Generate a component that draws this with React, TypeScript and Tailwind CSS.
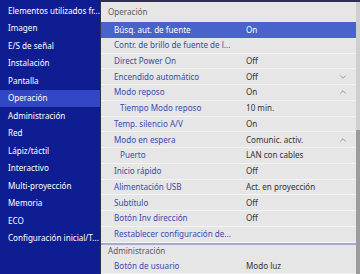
import { ChevronDown, ChevronUp } from 'lucide-react';

const menu = [
  'Elementos utilizados fr...',
  'Imagen',
  'E/S de señal',
  'Instalación',
  'Pantalla',
  'Operación',
  'Administración',
  'Red',
  'Lápiz/táctil',
  'Interactivo',
  'Multi-proyección',
  'Memoria',
  'ECO',
  'Configuración inicial/T...',
];

type Row = {
  label: string;
  value?: string;
  sub?: boolean;
  chevron?: 'up' | 'down';
  active?: boolean;
  header?: boolean;
};

const rows: Row[] = [
  { label: 'Operación', header: true },
  { label: 'Búsq. aut. de fuente', value: 'On', active: true },
  { label: 'Contr. de brillo de fuente de l...' },
  { label: 'Direct Power On', value: 'Off' },
  { label: 'Encendido automático', value: 'Off', chevron: 'down' },
  { label: 'Modo reposo', value: 'On', chevron: 'up' },
  { label: 'Tiempo Modo reposo', value: '10 min.', sub: true },
  { label: 'Temp. silencio A/V', value: 'On' },
  { label: 'Modo en espera', value: 'Comunic. activ.', chevron: 'up' },
  { label: 'Puerto', value: 'LAN con cables', sub: true },
  { label: 'Inicio rápido', value: 'Off' },
  { label: 'Alimentación USB', value: 'Act. en proyección' },
  { label: 'Subtítulo', value: 'Off' },
  { label: 'Botón Inv dirección', value: 'Off' },
  { label: 'Restablecer configuración de...' },
  { label: 'Administración', header: true },
  { label: 'Botón de usuario', value: 'Modo luz' },
];

export default function App() {
  return (
    <div className="flex h-[274px] w-[360px] overflow-hidden font-['Noto_Sans',sans-serif] text-[8.1px]">
      <aside className="w-[100px] shrink-0 bg-[#0f1d93] pt-[2px]">
        <ul>
          {menu.map((item) => (
            <li
              key={item}
              className={
                item === 'Operación'
                  ? 'flex h-[17.5px] items-center whitespace-nowrap bg-[#3346c6] pl-[8px] text-white'
                  : 'flex h-[17.5px] items-center whitespace-nowrap pl-[8px] text-white'
              }
            >
              {item}
            </li>
          ))}
        </ul>
      </aside>
      <main className="flex min-w-0 flex-1 border-l border-t-2 border-[#2e3250] bg-[#e6e6e6]">
        <div className="min-w-0 flex-1">
          {rows.map((row, i) => {
            if (row.header) {
              return (
                <div
                  key={row.label}
                  className={
                    i === 0
                      ? 'flex h-[20px] items-center pl-[7px] text-[#5c5c5c]'
                      : 'flex h-[16px] items-center border-t-2 border-[#a5a9d3] pl-[7px] text-[#5c5c5c]'
                  }
                >
                  {row.label}
                </div>
              );
            }
            return (
              <div
                key={row.label}
                className={
                  row.active
                    ? 'flex h-[15.75px] items-center bg-[#4a62cc] text-white'
                    : 'flex h-[15.75px] items-center border-b border-[#f3f3f3] text-[#3a4aae]'
                }
              >
                <span
                  className={
                    row.sub
                      ? 'w-[145px] whitespace-nowrap pl-[19px]'
                      : 'w-[145px] whitespace-nowrap pl-[13px]'
                  }
                >
                  {row.label}
                </span>
                <span className={row.active ? 'flex-1 whitespace-nowrap text-white' : 'flex-1 whitespace-nowrap text-[#333]'}>
                  {row.value}
                </span>
                <span className="flex w-[18px] items-center text-[#5566c2]">
                  {row.chevron === 'down' && <ChevronDown size={10} strokeWidth={1.5} />}
                  {row.chevron === 'up' && <ChevronUp size={10} strokeWidth={1.5} />}
                </span>
              </div>
            );
          })}
        </div>
        <div className="flex w-[4px] flex-col bg-[#cfcfcf]">
          <div className="h-[128px]" />
          <div className="flex-1 bg-[#9c9c9c]" />
        </div>
      </main>
    </div>
  );
}
